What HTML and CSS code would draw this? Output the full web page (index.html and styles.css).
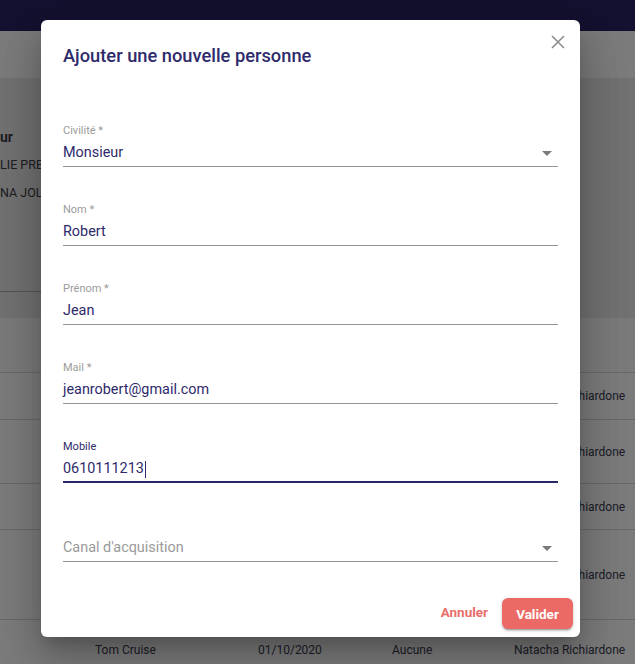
FILE: index.html
```html
<!DOCTYPE html>
<html lang="fr">
<head>
<meta charset="utf-8">
<title>Ajouter une nouvelle personne</title>
<link rel="stylesheet" href="styles.css">
</head>
<body>
<div class="page">
  <div class="topbar"></div>
  <div class="toolbar"></div>
  <div class="summary">
    <div class="summary-card">
      <div class="summary-title">ur</div>
      <div class="summary-line">LIE PRE</div>
      <div class="summary-line">NA JOL</div>
    </div>
  </div>
  <div class="table">
    <div class="row head"></div>
    <div class="row r1"><span></span><span></span><span></span><span></span><span>Natacha Richiardone</span></div>
    <div class="row r2"><span></span><span></span><span></span><span></span><span>Natacha Richiardone</span></div>
    <div class="row r3"><span></span><span></span><span></span><span></span><span>Natacha Richiardone</span></div>
    <div class="row r4"><span></span><span></span><span></span><span></span><span>Natacha Richiardone</span></div>
    <div class="row r5"><span></span><span>Tom Cruise</span><span>01/10/2020</span><span>Aucune</span><span>Natacha Richiardone</span></div>
  </div>
</div>
<div class="backdrop"></div>
<div class="dialog">
  <button class="close" aria-label="Fermer">
    <svg width="14" height="14" viewBox="0 0 14 14"><path d="M1 1L13 13M13 1L1 13" stroke="#8c8c8c" stroke-width="1.6" fill="none"/></svg>
  </button>
  <h2 class="dialog-title">Ajouter une nouvelle personne</h2>
  <div class="fields">
    <div class="field">
      <div class="label">Civilité *</div>
      <div class="control"><span class="value">Monsieur</span><span class="arrow"></span></div>
    </div>
    <div class="field">
      <div class="label">Nom *</div>
      <div class="control"><span class="value">Robert</span></div>
    </div>
    <div class="field">
      <div class="label">Prénom *</div>
      <div class="control"><span class="value">Jean</span></div>
    </div>
    <div class="field">
      <div class="label">Mail *</div>
      <div class="control"><span class="value">jeanrobert@gmail.com</span></div>
    </div>
    <div class="field focused">
      <div class="label">Mobile</div>
      <div class="control"><span class="value">0610111213<span class="caret"></span></span></div>
    </div>
    <div class="field">
      <div class="label"></div>
      <div class="control"><span class="value placeholder">Canal d'acquisition</span><span class="arrow"></span></div>
    </div>
  </div>
  <div class="actions">
    <button class="btn-text">Annuler</button>
    <button class="btn-primary">Valider</button>
  </div>
</div>
</body>
</html>
```
FILE: styles.css
```css
* { box-sizing: border-box; }
html, body { margin: 0; padding: 0; }
body {
  width: 635px;
  height: 664px;
  overflow: hidden;
  font-family: Roboto, "Liberation Sans", sans-serif;
  position: relative;
}
.page {
  width: 635px;
  height: 664px;
  background: #f6f6f6;
  display: flex;
  flex-direction: column;
}
.topbar { height: 31px; background: #27235f; flex: none; }
.toolbar { height: 47px; background: #f6f6f6; flex: none; }
.summary {
  height: 240px;
  flex: none;
  background: #e2e2e2;
}
.summary-card {
  width: 300px;
  height: 214px;
  border-bottom: 1px solid #a8a8a8;
  padding-top: 49px;
  color: #3a3a48;
}
.summary-title { font-weight: 700; font-size: 14px; line-height: 20px; }
.summary-line { font-size: 12.5px; line-height: 16px; margin-top: 10px; }
.summary-line + .summary-line { margin-top: 12px; }
.table { flex: 1; background: #f6f6f6; }
.row {
  display: grid;
  grid-template-columns: 95px 163px 134px 122px 1fr;
  align-items: center;
  border-bottom: 1px solid #d2d2d2;
  font-size: 12px;
  color: #3a3a50;
  white-space: nowrap;
}
.row.head { height: 55px; background: #f4f4f4; }
.r1 { height: 47px; }
.r2 { height: 64px; }
.r3 { height: 46px; }
.r4 { height: 90px; }
.r5 { height: 60px; border-bottom: none; }
.backdrop {
  position: absolute;
  inset: 0;
  background: rgba(0, 0, 0, 0.5);
}
.dialog {
  position: absolute;
  left: 41px;
  top: 20px;
  width: 539px;
  height: 617px;
  background: #fff;
  border-radius: 6px;
  box-shadow: 0 11px 15px -7px rgba(0,0,0,.2), 0 24px 38px 3px rgba(0,0,0,.14), 0 9px 46px 8px rgba(0,0,0,.12);
  padding: 24px 22px 8px 22px;
  display: flex;
  flex-direction: column;
}
.close {
  position: absolute;
  top: 15px;
  right: 15px;
  width: 14px;
  height: 14px;
  padding: 0;
  border: 0;
  background: none;
  display: flex;
}
.dialog-title {
  margin: 0;
  font-size: 18.3px;
  line-height: 24px;
  font-weight: 500;
  color: #2e2a6b;
}
.fields {
  margin-top: 56px;
  display: flex;
  flex-direction: column;
  gap: 36px;
}
.label {
  height: 14px;
  font-size: 11px;
  line-height: 14px;
  color: #9b9b9b;
}
.control {
  margin-top: 4px;
  height: 25px;
  padding-bottom: 2px;
  border-bottom: 1px solid #949494;
  display: flex;
  align-items: center;
  justify-content: space-between;
}
.value {
  font-size: 14.4px;
  line-height: 22px;
  color: #2e2a6b;
  display: flex;
  align-items: center;
}
.value.placeholder { color: #9a9a9a; }
.caret { width: 1px; height: 17px; background: #2e2a6b; margin-left: 1px; }
.arrow {
  width: 0;
  height: 0;
  border-left: 5px solid transparent;
  border-right: 5px solid transparent;
  border-top: 5px solid #7a7a7a;
  margin-right: 6px;
}
.focused .label { color: #2e2a6b; }
.focused .control { border-bottom: 2px solid #2a2766; padding-bottom: 1px; }
.actions {
  margin-top: auto;
  display: flex;
  justify-content: flex-end;
  align-items: center;
  gap: 6px;
  margin-right: -15px;
}
.btn-text, .btn-primary {
  font-family: Roboto, "Liberation Sans", sans-serif;
  font-size: 13.5px;
  font-weight: 700;
  border: 0;
  cursor: pointer;
}
.btn-text {
  background: none;
  color: #ea6e6a;
  padding: 0 8px 3px;
  height: 31px;
}
.btn-primary {
  background: #eb6a66;
  color: #fff;
  height: 31px;
  width: 71px;
  border-radius: 6px;
  box-shadow: 0 3px 1px -2px rgba(0,0,0,.2), 0 2px 2px 0 rgba(0,0,0,.14), 0 1px 5px 0 rgba(0,0,0,.12);
}
```
